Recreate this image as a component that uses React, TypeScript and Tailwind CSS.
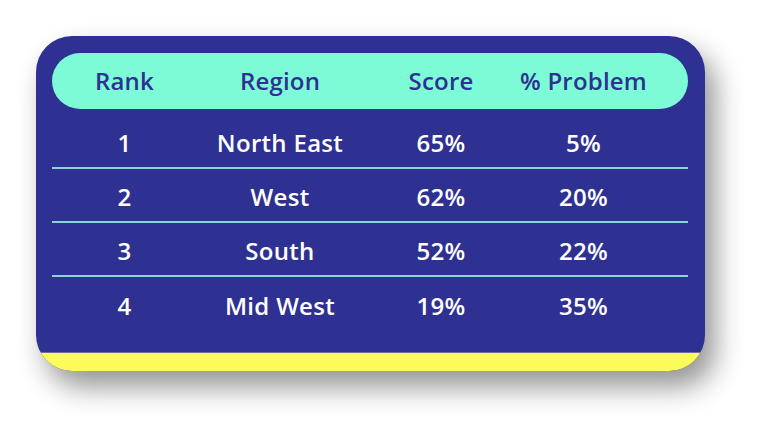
const headers = ["Rank", "Region", "Score", "% Problem"];

const rows = [
  { rank: "1", region: "North East", score: "65%", problem: "5%" },
  { rank: "2", region: "West", score: "62%", problem: "20%" },
  { rank: "3", region: "South", score: "52%", problem: "22%" },
  { rank: "4", region: "Mid West", score: "19%", problem: "35%" },
];

const cols = "grid grid-cols-[145px_166px_156px_129px] items-center text-center";

export default function App() {
  return (
    <div
      className="w-[778px] h-[444px] bg-white pl-[36px] pt-[36px]"
      style={{ fontFamily: '"Open Sans", "Liberation Sans", sans-serif' }}
    >
      <div className="w-[669px] h-[335px] rounded-[36px] overflow-hidden bg-[#2e3192] flex flex-col shadow-[10px_16px_28px_rgba(0,0,0,0.42)]">
        <div className="pt-[17px] pl-[16px] pr-[17px]">
          <div className={`${cols} h-[56px] rounded-full bg-[#7cfbd6] text-[#2e3192] text-[24px] font-semibold tracking-[0.2px]`}>
            {headers.map((h) => (
              <span key={h}>{h}</span>
            ))}
          </div>
          <div className="mt-[6px]">
            {rows.map((r, i) => (
              <div
                key={r.rank}
                className={`${cols} h-[54px] pt-[4px] text-white text-[24px] font-semibold tracking-[0.3px] ${
                  i < rows.length - 1 ? "border-b-2 border-[#8cd3d6]" : ""
                }`}
              >
                <span>{r.rank}</span>
                <span>{r.region}</span>
                <span>{r.score}</span>
                <span>{r.problem}</span>
              </div>
            ))}
          </div>
        </div>
        <div className="flex-1" />
        <div className="h-[19px] bg-[#fbfb5b] border-t border-[#6e6f9a]" />
      </div>
    </div>
  );
}
